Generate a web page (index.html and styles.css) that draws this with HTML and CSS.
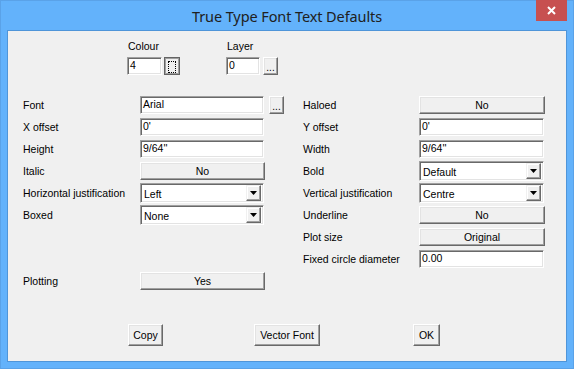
FILE: index.html
```html
<!DOCTYPE html>
<html>
<head>
<meta charset="utf-8">
<link rel="stylesheet" href="styles.css">
</head>
<body>
<div class="window">
  <div class="titlebar">
    <span class="title">True Type Font Text Defaults</span>
    <span class="close"><svg width="9" height="9" viewBox="0 0 9 9"><path d="M1 1L8 8M8 1L1 8" stroke="#fff" stroke-width="2" fill="none"/></svg></span>
  </div>
  <div class="client">
    <div class="top">
      <div class="group colour">
        <div class="glabel">Colour</div>
        <div class="grow">
          <div class="field w-colour">4</div>
          <div class="btn focus"><span class="focusrect"></span></div>
        </div>
      </div>
      <div class="group layer">
        <div class="glabel">Layer</div>
        <div class="grow">
          <div class="field w-layer">0</div>
          <div class="btn browse">...</div>
        </div>
      </div>
    </div>

    <div class="main">
      <div class="grid left">
        <div class="label">Font</div>
        <div class="field">Arial</div>
        <div class="btn browse">...</div>

        <div class="label">X offset</div>
        <div class="field">0'</div>
        <div></div>

        <div class="label">Height</div>
        <div class="field">9/64''</div>
        <div></div>

        <div class="label">Italic</div>
        <div class="btn wide">No</div>
        <div></div>

        <div class="label">Horizontal justification</div>
        <div class="combo"><span class="ctext">Left</span><span class="drop"><svg width="7" height="4" viewBox="0 0 7 4"><path d="M0 0H7L3.5 4Z" fill="#000"/></svg></span></div>
        <div></div>

        <div class="label">Boxed</div>
        <div class="combo"><span class="ctext">None</span><span class="drop"><svg width="7" height="4" viewBox="0 0 7 4"><path d="M0 0H7L3.5 4Z" fill="#000"/></svg></span></div>
        <div></div>

        <div class="label plot-row">Plotting</div>
        <div class="btn wide plot-row">Yes</div>
      </div>

      <div class="grid right">
        <div class="label">Haloed</div>
        <div class="btn wide">No</div>

        <div class="label">Y offset</div>
        <div class="field">0'</div>

        <div class="label">Width</div>
        <div class="field">9/64''</div>

        <div class="label">Bold</div>
        <div class="combo"><span class="ctext">Default</span><span class="drop"><svg width="7" height="4" viewBox="0 0 7 4"><path d="M0 0H7L3.5 4Z" fill="#000"/></svg></span></div>

        <div class="label">Vertical justification</div>
        <div class="combo"><span class="ctext">Centre</span><span class="drop"><svg width="7" height="4" viewBox="0 0 7 4"><path d="M0 0H7L3.5 4Z" fill="#000"/></svg></span></div>

        <div class="label">Underline</div>
        <div class="btn wide">No</div>

        <div class="label">Plot size</div>
        <div class="btn wide">Original</div>

        <div class="label">Fixed circle diameter</div>
        <div class="field">0.00</div>
      </div>
    </div>

    <div class="actions">
      <div class="btn action w-copy">Copy</div>
      <div class="btn action w-vector">Vector Font</div>
      <div class="btn action w-ok">OK</div>
    </div>
  </div>
</div>
</body>
</html>
```

FILE: styles.css
```css
html, body {
  margin: 0;
  padding: 0;
}
body {
  width: 574px;
  height: 369px;
  overflow: hidden;
  background: #63b2fb;
}
.window {
  position: relative;
  width: 574px;
  height: 369px;
  box-sizing: border-box;
  background: #63b2fb;
  border: 1px solid #5aa2e8;
  display: flex;
  flex-direction: column;
  font-family: "Liberation Sans", Arial, sans-serif;
  font-size: 10.5px;
  color: #000;
}
.titlebar {
  position: relative;
  height: 29px;
  flex: none;
  display: flex;
  align-items: center;
  justify-content: center;
}
.title {
  font-family: "Noto Sans", "Open Sans", sans-serif;
  font-size: 14.5px;
  color: #202020;
  margin-top: 1px;
  letter-spacing: -0.1px;
}
.close {
  position: absolute;
  top: -1px;
  right: 6px;
  width: 31px;
  height: 21px;
  background: #c75050;
  display: flex;
  align-items: center;
  justify-content: center;
}
.client {
  flex: 1;
  margin: 0 6px 6px;
  border: 1px solid #4f95d9;
  background: #f0f0f0;
  display: flex;
  flex-direction: column;
}
.top {
  display: flex;
  padding: 9px 0 0 119px;
}
.group {
  display: flex;
  flex-direction: column;
  gap: 4px;
}
.group.layer {
  margin-left: 46px;
}
.glabel {
  line-height: 13px;
  height: 13px;
  padding-left: 1px;
}
.grow {
  display: flex;
  gap: 2px;
}
.group.layer .grow {
  gap: 3px;
}
.field {
  box-sizing: border-box;
  height: 18px;
  background: #fff;
  border: 1px solid;
  border-color: #a0a0a0 #fff #fff #a0a0a0;
  box-shadow: inset 1px 1px 0 #696969, inset -1px -1px 0 #e3e3e3;
  padding: 1px 2px 0 2px;
  line-height: 12px;
  white-space: nowrap;
  overflow: hidden;
}
.w-colour { width: 35px; }
.w-layer { width: 34px; }
.btn {
  box-sizing: border-box;
  height: 18px;
  background: #f0f0f0;
  border: 1px solid;
  border-color: #fff #696969 #696969 #fff;
  box-shadow: inset -1px -1px 0 #a0a0a0, inset 1px 1px 0 #e3e3e3;
  display: flex;
  align-items: center;
  justify-content: center;
  white-space: nowrap;
  line-height: 12px;
}
.btn.focus {
  width: 16px;
  border-color: #646464;
  box-shadow: inset 1px 1px 0 #a0a0a0, inset -1px -1px 0 #a0a0a0;
  position: relative;
}
.focusrect {
  width: 8px;
  height: 12px;
  border: 1px dotted #000;
  box-sizing: border-box;
  margin-top: 1px;
}
.btn.browse {
  width: 15px;
  align-items: flex-end;
  line-height: 9px;
  padding-bottom: 2px;
  font-size: 10px;
}
.main {
  display: flex;
  margin-top: 19px;
  padding-left: 15px;
}
.grid {
  display: grid;
  grid-auto-rows: 22px;
  align-items: center;
}
.grid.left {
  grid-template-columns: 117px 125px 19px;
}
.grid.left .field,
.grid.left .combo {
  width: 124px;
}
.grid.left .btn.browse {
  margin-left: 4px;
}
.grid.right {
  margin-left: 19px;
  grid-template-columns: 116px 126px;
}
.grid.right .field,
.grid.right .combo {
  width: 125px;
}
.label {
  white-space: nowrap;
  line-height: 13px;
}
.btn.wide {
  width: 125px;
}
.grid.right .btn.wide {
  width: 126px;
}
.plot-row {
  grid-row: 9;
}
.combo {
  box-sizing: border-box;
  height: 20px;
  background: #fff;
  border: 1px solid;
  border-color: #a0a0a0 #fff #fff #a0a0a0;
  box-shadow: inset 1px 1px 0 #696969, inset -1px -1px 0 #e3e3e3;
  padding: 1px 1px 1px 1px;
  display: flex;
  align-items: stretch;
  justify-content: space-between;
}
.ctext {
  padding: 3px 0 0 2px;
  line-height: 12px;
}
.drop {
  box-sizing: border-box;
  width: 15px;
  margin-right: 1px;
  background: #f0f0f0;
  border: 1px solid;
  border-color: #f0f0f0 #696969 #696969 #f0f0f0;
  box-shadow: inset -1px -1px 0 #a0a0a0, inset 1px 1px 0 #fff;
  display: flex;
  align-items: center;
  justify-content: center;
}
.actions {
  display: flex;
  margin-top: 32px;
  padding-left: 120px;
}
.btn.action {
  height: 22px;
}
.w-copy { width: 35px; }
.w-vector { width: 66px; margin-left: 91px; }
.w-ok { width: 27px; margin-left: 93px; }
```
